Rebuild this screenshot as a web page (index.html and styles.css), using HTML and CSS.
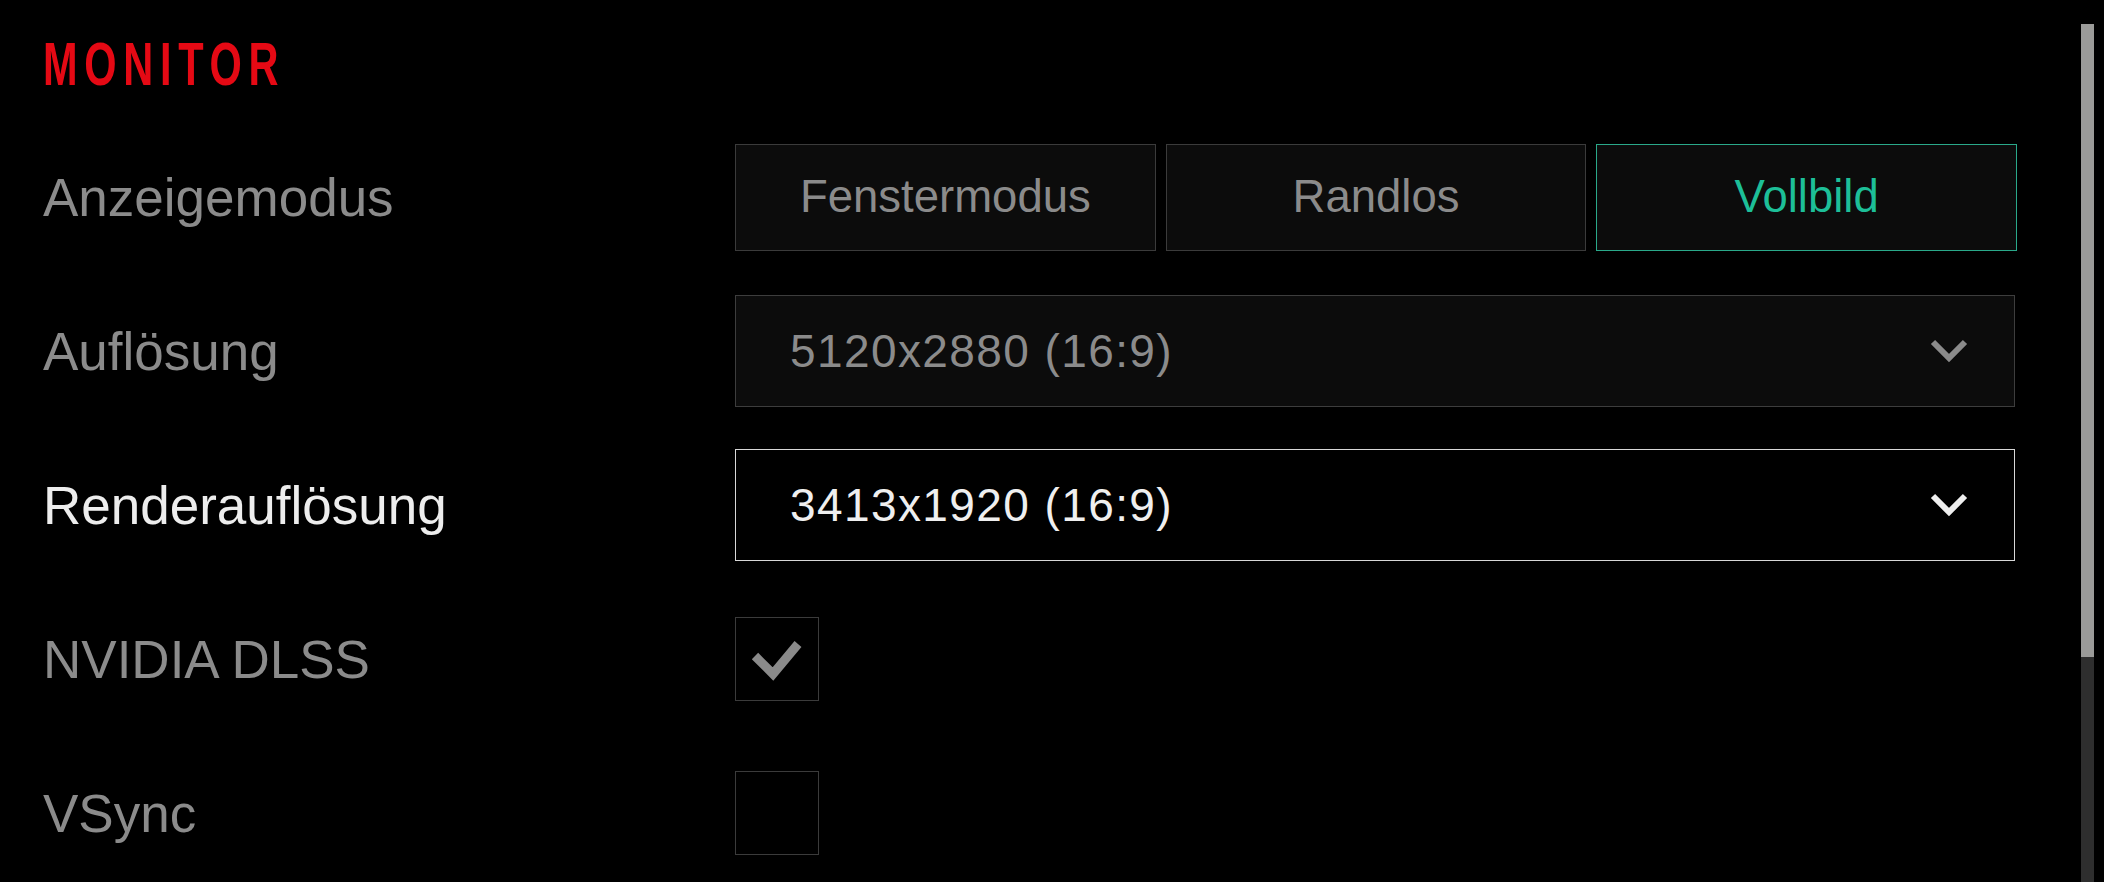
FILE: index.html
```html
<!DOCTYPE html>
<html lang="de">
<head>
<meta charset="utf-8">
<title>Monitor</title>
<link rel="stylesheet" href="styles.css">
</head>
<body>
<div class="page">
  <main class="content">
    <h1 class="heading"><span class="heading-text">MONITOR</span></h1>

    <div class="row">
      <div class="label">Anzeigemodus</div>
      <div class="segmented">
        <button class="seg">Fenstermodus</button>
        <button class="seg">Randlos</button>
        <button class="seg seg-active">Vollbild</button>
      </div>
    </div>

    <div class="row">
      <div class="label">Auflösung</div>
      <div class="select">
        <span class="select-value">5120x2880 (16:9)</span>
        <svg class="chevron" width="38" height="24" viewBox="0 0 38 24"><polyline points="3,3 19,19 35,3" fill="none" stroke="currentColor" stroke-width="6"/></svg>
      </div>
    </div>

    <div class="row">
      <div class="label label-active">Renderauflösung</div>
      <div class="select select-focus">
        <span class="select-value">3413x1920 (16:9)</span>
        <svg class="chevron" width="38" height="24" viewBox="0 0 38 24"><polyline points="3,3 19,19 35,3" fill="none" stroke="currentColor" stroke-width="6"/></svg>
      </div>
    </div>

    <div class="row">
      <div class="label">NVIDIA DLSS</div>
      <div class="checkbox">
        <svg width="82" height="82" viewBox="0 0 82 82"><polyline points="19,38 37,56 62,26" fill="none" stroke="#8a8a8a" stroke-width="9"/></svg>
      </div>
    </div>

    <div class="row">
      <div class="label">VSync</div>
      <div class="checkbox"></div>
    </div>
  </main>

  <div class="scrollbar"><div class="scroll-thumb"></div></div>
</div>
</body>
</html>
```

FILE: styles.css
```css
* { box-sizing: border-box; }

html, body {
  margin: 0;
  padding: 0;
  background: #000;
  height: 100%;
  overflow: hidden;
}

body {
  font-family: "Liberation Sans", Arial, sans-serif;
  color: #8b8b8b;
}

.page {
  display: flex;
  height: 882px;
}

.content {
  flex: 1;
  padding: 33px 0 0 43px;
}

.heading {
  margin: 0 0 26px 0;
  height: 61px;
  line-height: 61px;
  font-size: 62px;
  font-weight: 700;
  color: #e50914;
  white-space: nowrap;
}

.heading-text {
  display: inline-block;
  transform: scaleX(0.67);
  transform-origin: left center;
  letter-spacing: 10px;
}

.row {
  display: grid;
  grid-template-columns: 692px 1282px;
  align-items: center;
  height: 154px;
}

.label {
  font-size: 53px;
  color: #8b8b8b;
  white-space: nowrap;
}

.label-active {
  color: #ededed;
}

.segmented {
  display: flex;
  gap: 10px;
}

.seg {
  flex: 1;
  height: 107px;
  background: #0c0c0c;
  border: 1px solid #3b3b3b;
  color: #8b8b8b;
  font-family: "Liberation Sans", Arial, sans-serif;
  font-size: 45.5px;
  padding: 0;
}

.seg-active {
  border-color: #2aa98a;
  color: #1dbf98;
}

.select {
  width: 1280px;
  height: 112px;
  display: flex;
  align-items: center;
  justify-content: space-between;
  padding: 0 46px 0 54px;
  background: #0c0c0c;
  border: 1px solid #3d3d3d;
  color: #8b8b8b;
}

.select-value {
  font-size: 46px;
  letter-spacing: 1.4px;
}

.select-focus {
  background: #000;
  border-color: #d8d8d8;
  color: #efefef;
}

.chevron {
  display: block;
}

.checkbox {
  width: 84px;
  height: 84px;
  border: 1px solid #3b3b3b;
  background: #000;
}

.checkbox svg {
  display: block;
}

.scrollbar {
  width: 13px;
  margin: 24px 10px 0 0;
  background: #2e2e2e;
}

.scroll-thumb {
  height: 633px;
  background: #9b9b99;
}
```
